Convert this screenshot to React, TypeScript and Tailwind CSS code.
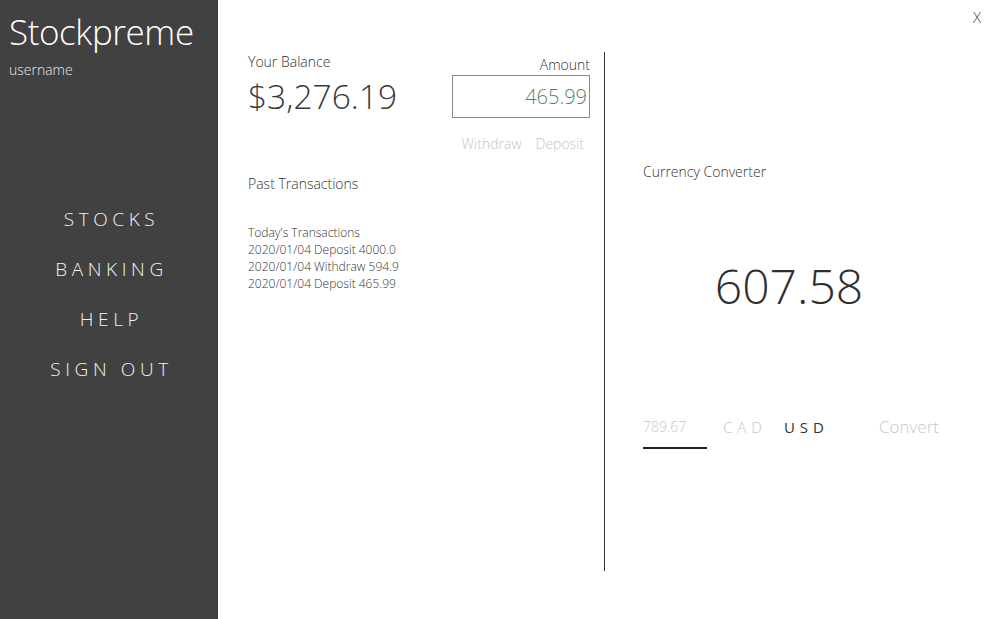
import React from 'react';

const font = { fontFamily: '"Open Sans", "Noto Sans", sans-serif' };

const NAV = ['STOCKS', 'BANKING', 'HELP', 'SIGN OUT'];

const TRANSACTIONS = [
  "Today's Transactions",
  '2020/01/04 Deposit 4000.0',
  '2020/01/04 Withdraw 594.9',
  '2020/01/04 Deposit 465.99',
];

export default function App() {
  return (
    <div className="flex h-[619px] w-[995px] overflow-hidden bg-white" style={font}>
      {/* Sidebar */}
      <aside className="flex w-[218px] shrink-0 flex-col bg-[#414141] text-white">
        <div className="pl-[9px] pt-[8px]">
          <div className="text-[35px] font-light leading-[48px] tracking-[-0.4px]">Stockpreme</div>
          <div className="mt-[4px] text-[14px] font-light leading-[20px] text-[#e8e8e8]">username</div>
        </div>
        <nav className="mt-[126px] flex flex-col items-center gap-[24px]">
          {NAV.map((item) => (
            <div key={item} className="pl-[5px] text-[19px] font-light leading-[26px] tracking-[4.6px] text-[#f2f2f2]">
              {item}
            </div>
          ))}
        </nav>
      </aside>

      {/* Main */}
      <main className="relative flex flex-1 pl-[30px] pt-[52px] text-[#333]">
        <button className="absolute right-[14px] top-[6px] text-[15px] font-light text-[#444]">X</button>

        {/* Banking column */}
        <section className="w-[342px]">
          <div className="flex justify-between">
            <div>
              <div className="text-[14px] font-light leading-[20px]">Your Balance</div>
              <div className="mt-[1px] text-[33.5px] font-light leading-[46px] text-[#3a3a3a]">$3,276.19</div>
            </div>
            <div className="flex flex-col items-end pt-[3px]">
              <div className="text-[14px] font-light leading-[20px]">Amount</div>
              <div className="flex h-[43px] w-[138px] items-center justify-end border border-[#8a8a8a] pr-[2px] text-[20px] font-light text-[#5e7f6c]">
                465.99
              </div>
              <div className="mt-[15px] flex gap-[14px] pr-[6px] text-[14px] font-light text-[#c4c4c4]">
                <span>Withdraw</span>
                <span>Deposit</span>
              </div>
            </div>
          </div>
          <div className="mt-[20px] text-[14px] font-light leading-[20px]">Past Transactions</div>
          <div className="mt-[30px] text-[12px] leading-[17px] font-light">
            {TRANSACTIONS.map((t) => (
              <div key={t}>{t}</div>
            ))}
          </div>
        </section>

        {/* Divider */}
        <div className="ml-[14px] h-[519px] w-px bg-[#333]" />

        {/* Currency converter */}
        <section className="w-[330px] pl-[38px] pt-[110px]">
          <div className="text-[14px] font-light leading-[20px]">Currency Converter</div>
          <div className="mt-[71px] text-center text-[48px] font-light leading-[66px] text-[#2f2f2f]">607.58</div>
          <div className="mt-[97px] flex items-start text-[15px] font-light">
            <div className="w-[64px] shrink-0 border-b-2 border-[#222] pb-[10px] text-[14px] leading-[21px] text-[#c8c8c8]">789.67</div>
            <div className="ml-[16px] shrink-0 leading-[22px] tracking-[5px] text-[#c8c8c8]">CAD</div>
            <div className="ml-[17px] shrink-0 leading-[22px] tracking-[5px] font-normal text-[#333]">USD</div>
            <div className="ml-[50px] shrink-0 text-[17px] leading-[22px] text-[#c8c8c8]">Convert</div>
          </div>
        </section>
      </main>
    </div>
  );
}
